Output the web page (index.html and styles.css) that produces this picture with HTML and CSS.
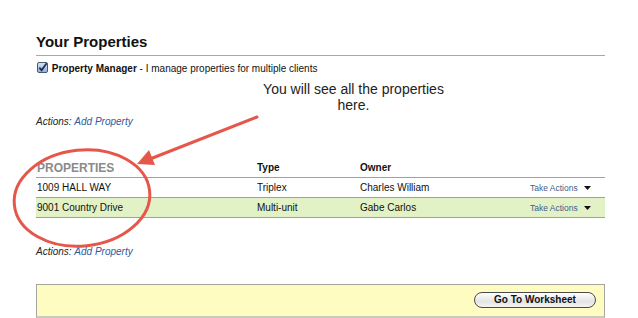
FILE: index.html
```html
<!DOCTYPE html>
<html lang="en">
<head>
    <meta charset="UTF-8">
    <title>Your Properties</title>
    <link rel="stylesheet" href="styles.css">
</head>
<body>
    <div class="page">
        <h1 class="title">Your Properties</h1>

        <div class="role">
            <svg class="check" width="11" height="11" viewBox="0 0 11 11">
                <defs>
                    <linearGradient id="cb" x1="0" y1="0" x2="0" y2="1">
                        <stop offset="0" stop-color="#d8e6f5"/>
                        <stop offset="1" stop-color="#8fb0d8"/>
                    </linearGradient>
                </defs>
                <rect x="0.5" y="0.5" width="10" height="10" rx="1.5" fill="url(#cb)" stroke="#4a5a70"/>
                <path d="M2.3 5.6 L4.6 8.2 L9.6 1.2" fill="none" stroke="#1c2f55" stroke-width="1.8"/>
            </svg>
            <b>Property Manager</b> - I manage properties for multiple clients
        </div>

        <div class="note">You will see all the properties<br>here.</div>

        <div class="actions"><i>Actions:</i> <a href="#">Add Property</a></div>

        <div class="grid">
            <div class="row head">
                <span class="col-prop">PROPERTIES</span>
                <span>Type</span>
                <span>Owner</span>
                <span></span>
            </div>
            <div class="row">
                <span>1009 HALL WAY</span>
                <span>Triplex</span>
                <span>Charles William</span>
                <a class="take" href="#">Take Actions <svg class="caret" width="7" height="4" viewBox="0 0 7 4"><polygon points="0,0 7,0 3.5,4" fill="#111"/></svg></a>
            </div>
            <div class="row alt">
                <span>9001 Country Drive</span>
                <span>Multi-unit</span>
                <span>Gabe Carlos</span>
                <a class="take" href="#">Take Actions <svg class="caret" width="7" height="4" viewBox="0 0 7 4"><polygon points="0,0 7,0 3.5,4" fill="#111"/></svg></a>
            </div>
        </div>

        <div class="actions bottom"><i>Actions:</i> <a href="#">Add Property</a></div>

        <div class="footer">
            <button class="btn">Go To Worksheet</button>
        </div>
    </div>

    <!-- callout drawn over the page -->
    <svg class="callout" width="638" height="318" viewBox="0 0 638 318">
        <line x1="257" y1="117" x2="150" y2="159" stroke="#e5574a" stroke-width="3" stroke-linecap="round"/>
        <polygon points="137,164 155,165 149,150" fill="#e5574a"/>
        <ellipse cx="82" cy="198" rx="68" ry="48" transform="rotate(-6 82 198)" fill="none" stroke="#e5574a" stroke-width="3"/>
    </svg>
</body>
</html>
```

FILE: styles.css
```css
body {
    margin: 0;
    background: #ffffff;
    font-family: "Liberation Sans", Arial, sans-serif;
    font-size: 10px;
    color: #111;
}

.page {
    margin-left: 36px;
    width: 569px;
}

.title {
    margin: 0;
    padding: 32px 0 3px 0;
    font-size: 15px;
    line-height: 20px;
    border-bottom: 1px solid #a8a8a8;
}

.role {
    margin-top: 6px;
    height: 14px;
    line-height: 14px;
    padding-left: 1px;
}

.check {
    vertical-align: -1px;
    margin-right: 1px;
}

.note {
    margin-top: 5px;
    margin-left: 170px;
    width: 295px;
    text-align: center;
    font-size: 14px;
    line-height: 16px;
    color: #222;
}

.actions {
    margin-top: 2px;
    height: 14px;
    line-height: 14px;
    color: #222;
}

.actions a {
    color: #2d5a9a;
    font-style: italic;
    text-decoration: none;
}

.actions.bottom {
    margin-top: 27px;
}

.grid {
    margin-top: 29px;
}

.row {
    display: grid;
    grid-template-columns: 220px 103px 1fr auto;
    align-items: center;
    height: 20px;
    box-sizing: border-box;
    border-bottom: 1px solid #a0a0a0;
    padding: 0 14px 0 1px;
}

.row.head {
    font-weight: bold;
}

.row.head .col-prop {
    color: #8a8a8a;
    font-size: 12px;
}

.row.alt {
    background: #e3f1c6;
}

.take {
    color: #3b5f8e;
    font-size: 8.5px;
    text-decoration: none;
}

.caret {
    margin-left: 4px;
    vertical-align: 1px;
}

.footer {
    margin-top: 25px;
    height: 34px;
    box-sizing: border-box;
    background: #fefcc1;
    border: 1px solid #a6a6a0;
    border-bottom: 2px solid #c9c9c2;
    display: flex;
    justify-content: flex-end;
    padding: 7px 8px 0 0;
}

.btn {
    width: 122px;
    height: 16px;
    padding: 0;
    border: 1px solid #4a4a4a;
    border-radius: 8px;
    background: linear-gradient(#ffffff, #e4e4e4 60%, #f4f4f4);
    font-family: "Liberation Sans", Arial, sans-serif;
    font-size: 10px;
    font-weight: bold;
    color: #111;
    line-height: 14px;
}

.callout {
    position: absolute;
    left: 0;
    top: 0;
    pointer-events: none;
}
```
